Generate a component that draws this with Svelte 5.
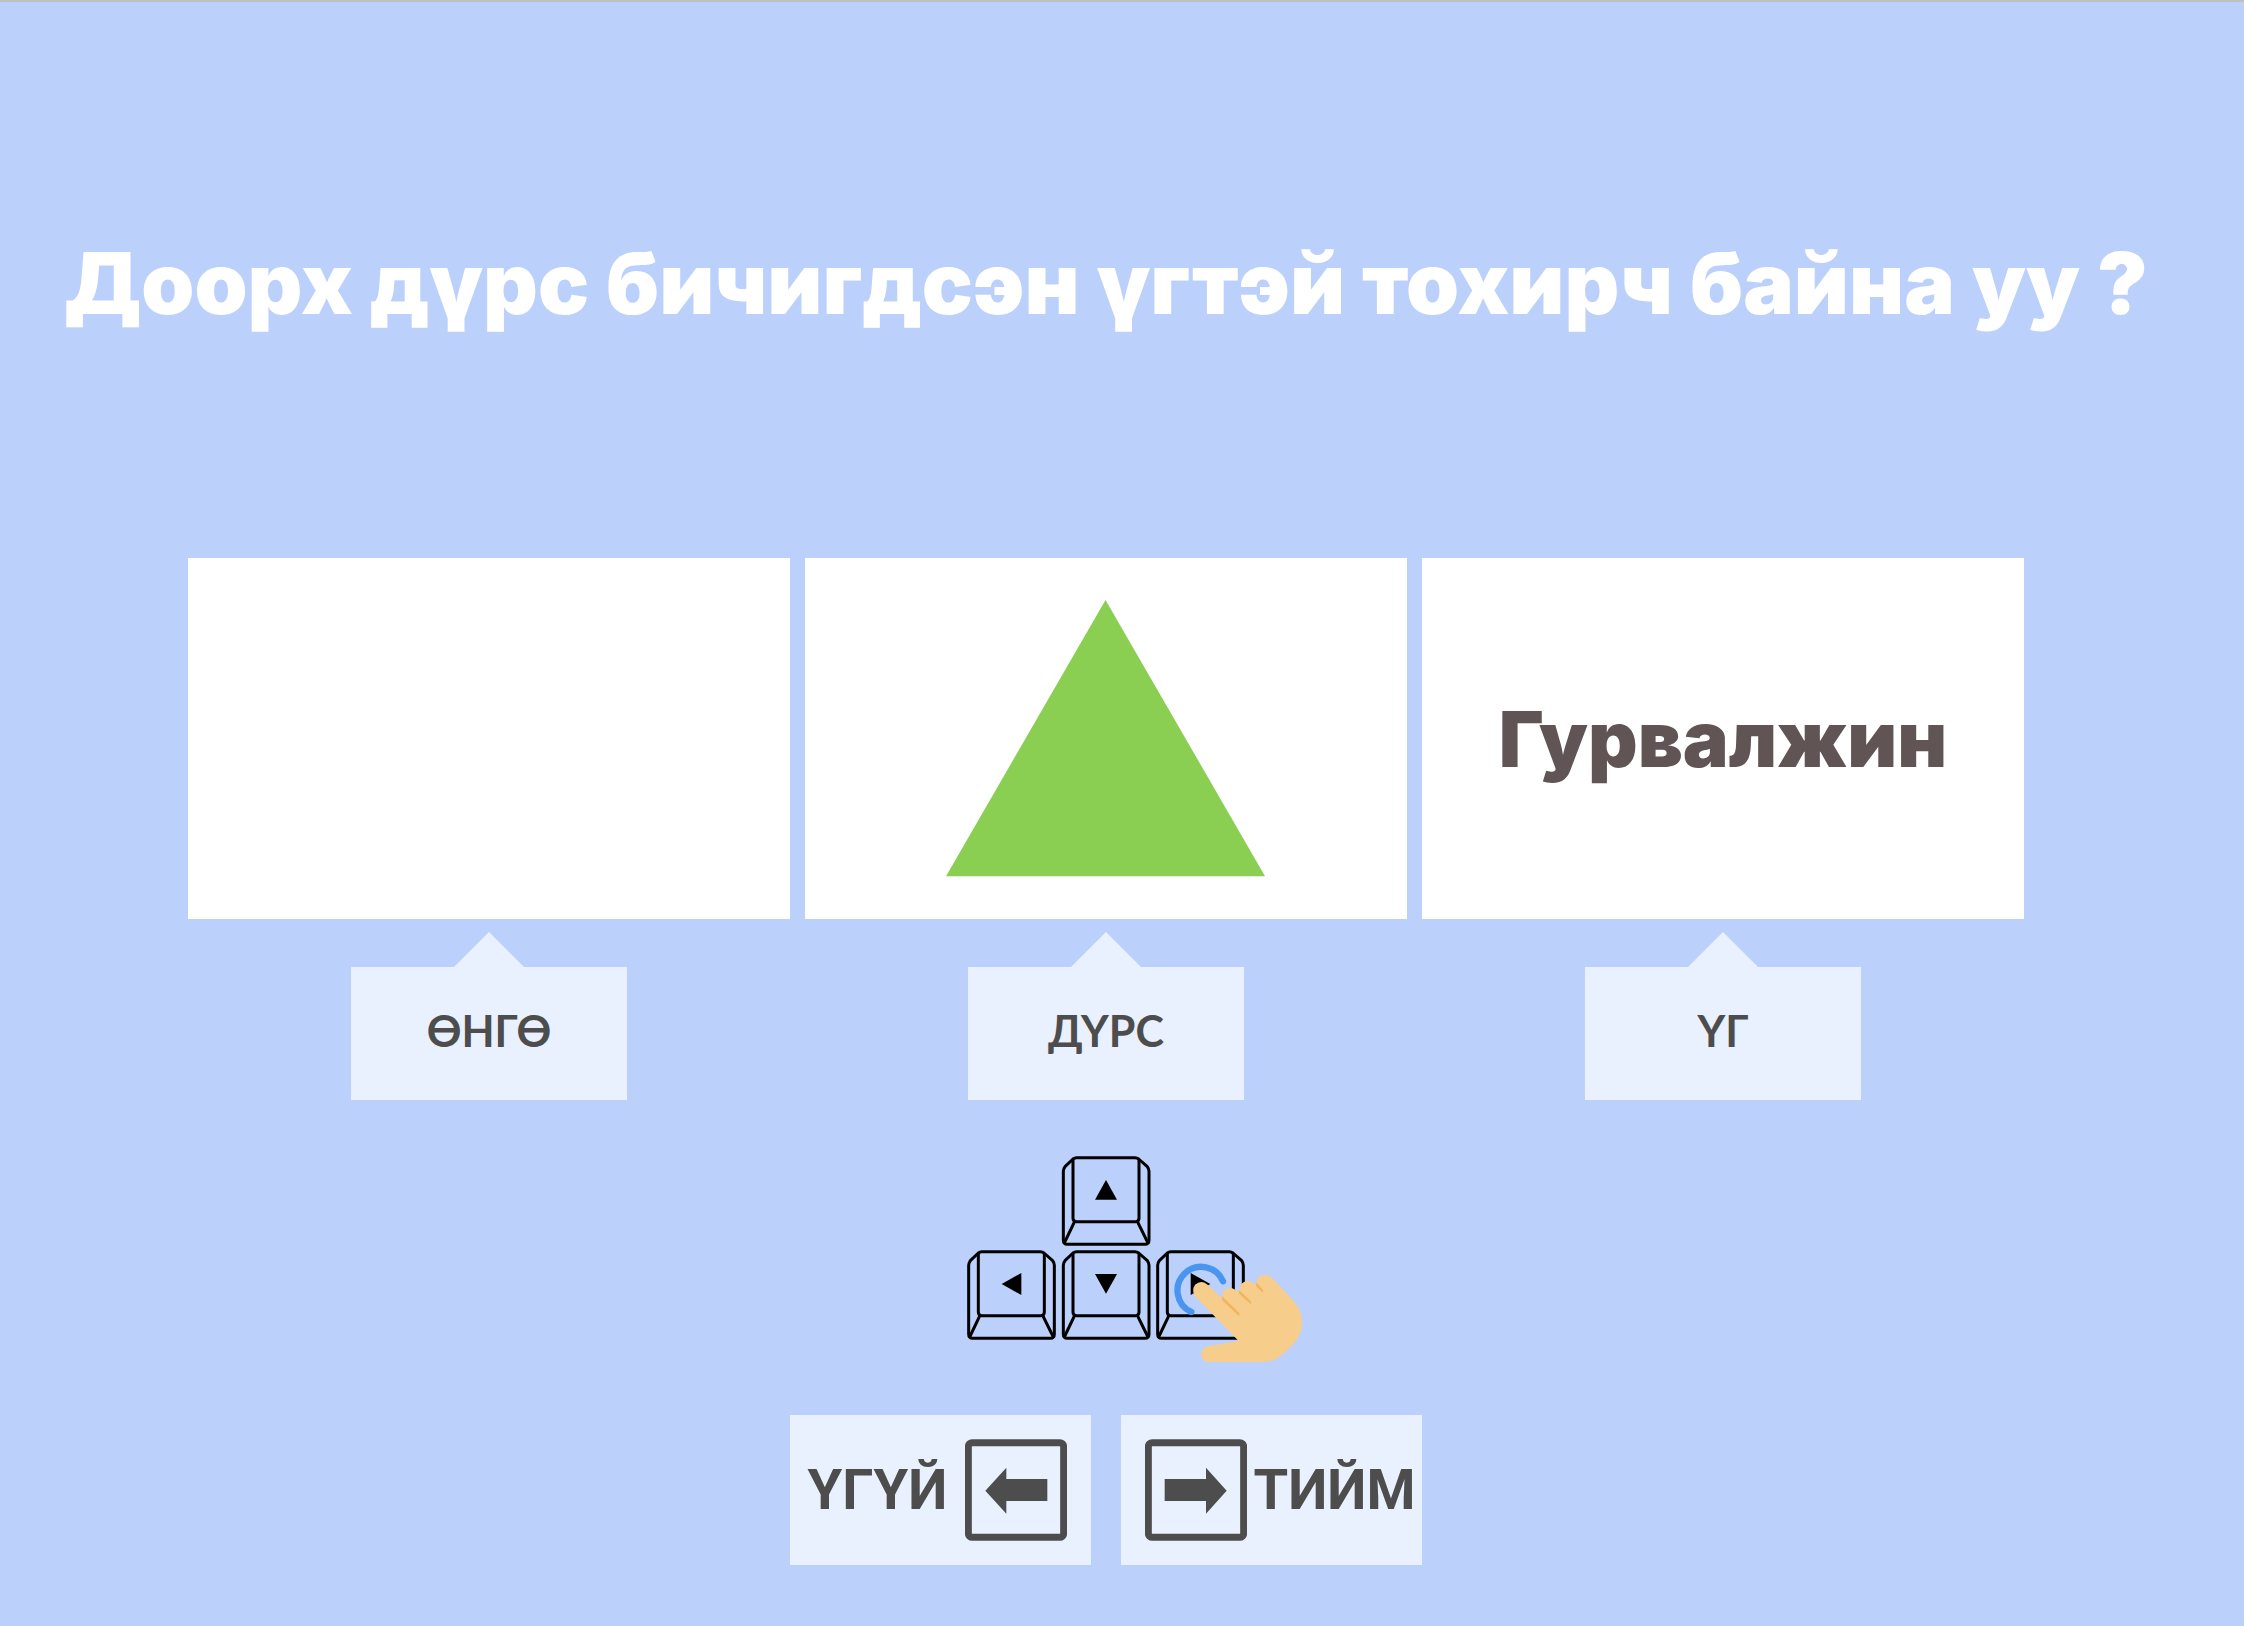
<script>
  const cards = [
    { id: 'color', label: 'ӨНГӨ' },
    { id: 'shape', label: 'ДҮРС' },
    { id: 'word', label: 'ҮГ', word: 'Гурвалжин' }
  ];
  const keys = [
    { x: 335, y: 48, arrow: 'M468 120L501 179H435Z' },
    { x: 51, y: 330, arrow: 'M155 432L214 399V465Z' },
    { x: 335, y: 330, arrow: 'M468 461L501 402H435Z' },
    { x: 618, y: 330, arrow: 'M781 432L722 399V465Z' }
  ];
  let answer = $state(null);

  function onkeydown(event) {
    if (event.key === 'ArrowLeft') answer = 'no';
    if (event.key === 'ArrowRight') answer = 'yes';
  }
</script>

<svelte:window {onkeydown} />

<main>
  <h1>Доорх дүрс бичигдсэн үгтэй тохирч байна уу ?</h1>

  <section class="cards">
    {#each cards as card (card.id)}
      <figure>
        <div class="card">
          {#if card.id === 'shape'}
            <svg class="triangle" viewBox="0 0 320 279" aria-hidden="true">
              <path d="M160 0L320 277H0Z" fill="#8acf52" />
            </svg>
          {:else if card.word}
            <span class="word">{card.word}</span>
          {/if}
        </div>
        <svg class="tip" viewBox="0 0 70 35" aria-hidden="true">
          <path d="M35 0L70 35H0Z" fill="#e9f0fe" />
        </svg>
        <figcaption>{card.label}</figcaption>
      </figure>
    {/each}
  </section>

  <svg class="keys" viewBox="-132 48 1200 621" aria-hidden="true">
    {#each keys as key}
      <g transform="translate({key.x} {key.y})" fill="none" stroke="#000" stroke-width="9" stroke-linejoin="round">
        <path d="M44 5H220Q226 5 231 9L257 32Q262 38 262 46V252Q262 265 250 265H17Q5 265 5 252V46Q5 38 10 32L34 9Q39 5 44 5Z" />
        <path d="M34 9V187Q34 197 44 197H222Q232 197 232 187V9" />
        <path d="M39 196L8 261M227 196L259 261" />
      </g>
      <path d={key.arrow} />
    {/each}
    <g transform="translate(540 270)">
      <path d="M279 154A71 71 0 1 0 184 246" fill="none" stroke="#4a96ee" stroke-width="19" stroke-linecap="round" />
      <path d="M195 164Q213 149 231 163L276 205Q274 181 293 175Q305 171 316 179L328 188Q326 162 344 155Q358 150 370 159L380 166Q376 143 395 136Q411 131 424 142L490 212Q516 240 516 278Q516 314 491 341L460 371Q433 396 400 396H232Q214 391 214 371Q216 350 242 347L326 333L195 199Q184 181 195 164Z" fill="#f7cd8b" />
      <path d="M276 199L329 250L326 258L276 211ZM327 180L364 215L362 223L327 191ZM379 157L399 180V188L379 170Z" fill="#f2b55f" />
    </g>
  </svg>

  <div class="answers">
    <button type="button" aria-pressed={answer === 'no'} onclick={() => (answer = 'no')}>
      <span>ҮГҮЙ</span>
      <svg viewBox="0 0 306 306" aria-hidden="true">
        <rect x="10" y="11" width="286" height="284" rx="12" fill="none" stroke="#4d4d4d" stroke-width="21" />
        <path d="M61 155L124 86V120H247V186H124V224Z" fill="#4d4d4d" />
      </svg>
    </button>
    <button type="button" aria-pressed={answer === 'yes'} onclick={() => (answer = 'yes')}>
      <svg viewBox="0 0 306 306" aria-hidden="true">
        <rect x="10" y="11" width="286" height="284" rx="12" fill="none" stroke="#4d4d4d" stroke-width="21" />
        <path d="M245 155L183 86V120H59V186H183V224Z" fill="#4d4d4d" />
      </svg>
      <span>ТИЙМ</span>
    </button>
  </div>
</main>

<style>
  :global(body) {
    background: #bbd0fb;
  }

  main {
    box-sizing: border-box;
    min-height: 100vh;
    padding: 222px 32px 60px 0;
    border-top: 2px solid #c0c0c0;
    display: flex;
    flex-direction: column;
    align-items: center;
    font-family: Inter, 'Open Sans', sans-serif;
    color: #4d4d4d;
  }

  h1 {
    margin: 0 0 214px;
    font-size: 85px;
    line-height: 120px;
    font-weight: 900;
    text-align: center;
    color: #fff;
  }

  .cards {
    width: 83%;
    display: grid;
    grid-template-columns: repeat(3, 1fr);
    gap: 15px;
  }

  figure {
    margin: 0;
    display: flex;
    flex-direction: column;
    align-items: center;
  }

  .card {
    width: 100%;
    aspect-ratio: 5 / 3;
    display: flex;
    align-items: center;
    justify-content: center;
    background: #fff;
  }

  .triangle {
    width: 53%;
  }

  .word {
    font-size: 77px;
    line-height: 90px;
    font-weight: 900;
    color: #615454;
  }

  .tip {
    width: 70px;
    margin-top: 13px;
  }

  figcaption {
    box-sizing: border-box;
    width: 46%;
    padding: 36px 0 41px;
    background: #e9f0fe;
    font-family: Lato, Inter, sans-serif;
    font-size: 43px;
    line-height: 56px;
    font-weight: 700;
    text-align: center;
  }

  .keys {
    width: 400px;
    margin: 56px 0 52px;
  }

  .answers {
    display: flex;
    gap: 30px;
  }

  button {
    width: 301px;
    padding: 24px;
    display: flex;
    align-items: center;
    border: 0;
    background: #e9f0fe;
    color: inherit;
    font: 700 56px/70px Roboto, Inter, sans-serif;
    cursor: pointer;
  }

  button svg {
    width: 102px;
    flex: none;
  }

  button span {
    flex: 1;
    text-align: center;
  }

  button:first-child {
    padding-left: 0;
  }

  button:last-child {
    padding-right: 0;
  }
</style>
